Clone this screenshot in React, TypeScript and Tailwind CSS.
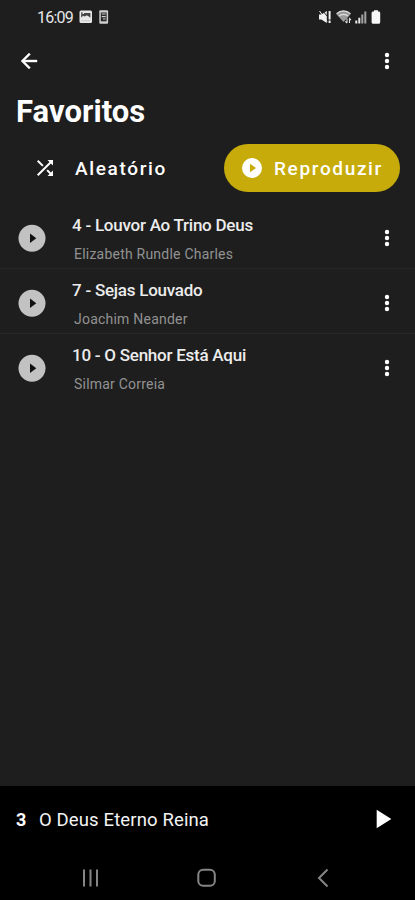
type Song = {
    id: number;
    title: string;
    author: string;
};

const songs: Song[] = [
    { id: 4, title: 'Louvor Ao Trino Deus', author: 'Elizabeth Rundle Charles' },
    { id: 7, title: 'Sejas Louvado', author: 'Joachim Neander' },
    { id: 10, title: 'O Senhor Está Aqui', author: 'Silmar Correia' },
];

function MoreIcon() {
    return (
        <svg viewBox="0 0 24 24" className="size-6 shrink-0" fill="#fff">
            <circle cx="12" cy="6" r="2.2" />
            <circle cx="12" cy="12" r="2.2" />
            <circle cx="12" cy="18" r="2.2" />
        </svg>
    );
}

function StatusBar() {
    return (
        <div className="flex h-[34px] shrink-0 items-center pl-[37px] pr-[34px]">
            <span className="w-[36px] whitespace-nowrap pt-px text-[16px] leading-none tracking-[-0.8px] text-[#e6e6e6]">16:09</span>
            {/* picture notification */}
            <svg viewBox="0 0 14 14" className="ml-[6px] h-[14px] w-[14px]">
                <rect x="0.5" y="0.5" width="12.5" height="12.5" rx="1.5" fill="#e8e8e8" />
                <path d="M2.2 2.3v5.5l1.8-2 1.8.8 1.5-1.2 1.5.3 2.6 2V3H5v1H3.5V2.3z" fill="#444" />
                <path d="M2.2 10.8h9.2" stroke="#bbb" strokeWidth=".8" />
            </svg>
            {/* phone with a note */}
            <svg viewBox="0 0 10 14" className="ml-[6px] h-[14px] w-[10px]">
                <rect x="0.3" y="0.2" width="8.8" height="13.6" rx="1" fill="#cfcfcf" />
                <path d="M1.8 2.5h5.8v8.8H1.8z" fill="#292929" />
                <path d="M2.7 4h4M2.7 6.6h4M4 9h2.6" stroke="#cfcfcf" strokeWidth="1.1" />
            </svg>
            <div className="ml-auto flex items-center">
                <svg viewBox="0 0 14 14" className="h-[14px] w-[14px]" fill="#f0f0f0">
                    <path d="M1 4.5h2.4L8.8 1v12L3.4 9.5H1z" />
                    <path d="M4 0l5.5 6.5" stroke="#1e1e1e" strokeWidth="1" />
                    <path d="M1.5 1l7.5 10.5" stroke="#f0f0f0" strokeWidth="1" />
                    <path d="M10.6 1h2v8.5h-2zM10.6 10.5h2v2.5h-2z" />
                </svg>
                <svg viewBox="0 0 16 14" className="ml-[4px] h-[14px] w-[16px]">
                    <path d="M0 3.8C4.2-.3 10.8-.3 15 3.8L7.5 12z" fill="#9a9a9a" />
                    <path d="M.6 3.6c4-3.7 9.8-3.7 13.8 0M2.8 6.2c2.7-2.4 6.7-2.4 9.4 0" fill="none" stroke="#ddd" strokeWidth="1.1" />
                    <path d="M11 8.5v4.5M9.3 11.3l1.7 1.7M13.5 13V8.5l1.5 1.7" fill="none" stroke="#e0e0e0" strokeWidth="1.1" />
                </svg>
                <svg viewBox="0 0 12 14" className="ml-[3px] h-[14px] w-[12px]">
                    <path d="M.3 10.5h2v3h-2zM3.3 7.8h2v5.7h-2z" fill="#e8e8e8" />
                    <path d="M6.3 4.5h2v9h-2zM9.3 1.5h2v12h-2z" fill="#a2a2a2" />
                </svg>
                <svg viewBox="0 0 10 14" className="ml-[4px] h-[14px] w-[10px]" fill="#f7f7f7">
                    <path d="M3 .3h4v1.3h.7c.8 0 1.5.7 1.5 1.5v9.2c0 .8-.7 1.5-1.5 1.5H2.1c-.8 0-1.5-.7-1.5-1.5V3.1c0-.8.7-1.5 1.5-1.5H3z" />
                </svg>
            </div>
        </div>
    );
}

function SongRow({ song, last }: { song: Song; last: boolean }) {
    return (
        <li className={`flex h-[65px] items-center border-b pl-[18px] pr-4 ${last ? 'border-transparent' : 'border-[#272727]'}`}>
            <svg viewBox="0 0 28 28" className="mt-1 size-7 shrink-0">
                <circle cx="14" cy="14.3" r="13.5" fill="#c2c2c2" />
                <path d="M12 9.6V19l6.3-4.7z" fill="#111" />
            </svg>
            <div className="ml-[26px] min-w-0 flex-1 whitespace-nowrap pt-[5px]">
                <p className="text-[17px] font-medium leading-6 tracking-[-0.25px] text-[#ececec]">
                    {song.id} - {song.title}
                </p>
                <p className="mt-[7px] pl-[2px] text-[14px] leading-5 tracking-[0.22px] text-[#929292]">{song.author}</p>
            </div>
            <div className="mt-1">
                <MoreIcon />
            </div>
        </li>
    );
}

export default function App() {
    return (
        <div className="flex h-[900px] w-[415px] flex-col overflow-hidden bg-[#1e1e1e] font-['Roboto',sans-serif] text-white">
            <StatusBar />
            <header className="flex h-[54px] shrink-0 items-center justify-between pl-[17px] pr-4">
                <svg viewBox="0 0 24 24" className="size-6" fill="#fff">
                    <path d="M20 11H7.83l5.59-5.59L12 4l-8 8 8 8 1.41-1.41L7.83 13H20z" stroke="#fff" strokeWidth=".4" />
                </svg>
                <MoreIcon />
            </header>
            <h1 className="h-[56px] shrink-0 pl-4 pt-[6px] text-[31px] font-bold leading-9 tracking-[0.05px]">Favoritos</h1>

            <div className="flex h-12 shrink-0 items-center pr-[15px]">
                <button className="flex h-12 flex-1 items-center pl-[33px]">
                    <svg viewBox="0 0 24 24" className="size-6" fill="#fff">
                        <path d="M10.59 9.17 5.41 4 4 5.41l5.17 5.17zM14.5 4l2.04 2.04L4 18.59 5.41 20 17.96 7.46 20 9.5V4zm.33 9.41-1.41 1.41 3.13 3.13L14.5 20H20v-5.5l-2.04 2.04z" />
                    </svg>
                    <span className="ml-[18px] pt-[2px] text-[19px] font-medium leading-6 tracking-[1.65px]">Aleatório</span>
                </button>
                <button className="flex h-12 w-[176px] items-center rounded-full bg-[#c7ab0b] pl-4">
                    <svg viewBox="0 0 24 24" className="size-6" fill="#fff">
                        <path d="M12 2a10 10 0 1 0 0 20 10 10 0 0 0 0-20zm-2 14.3V7.7l6 4.3z" />
                    </svg>
                    <span className="ml-[10px] pt-[2px] text-[19px] font-medium leading-6 tracking-[1.65px]">Reproduzir</span>
                </button>
            </div>

            <ul className="mt-3 flex-1">
                {songs.map((song, i) => (
                    <SongRow key={song.id} song={song} last={i === songs.length - 1} />
                ))}
            </ul>

            <div className="flex h-[68px] shrink-0 items-center bg-black pb-[2px] pl-4 pr-[17px]">
                <span className="w-[23px] pt-px text-[18px] font-bold leading-6">3</span>
                <span className="flex-1 pt-[2px] text-[18.5px] leading-6 tracking-[0.13px] text-[#f4f4f4]">O Deus Eterno Reina</span>
                <svg viewBox="0 0 24 24" className="size-8" fill="#fff">
                    <path d="M8 5v14l11-7z" />
                </svg>
            </div>
            <nav className="flex h-[46px] shrink-0 items-center bg-black pl-[81px] pt-px">
                <svg viewBox="0 0 20 20" className="size-5" stroke="#858585" strokeWidth="2">
                    <path d="M3 1.5v17M9.5 1.5v17M16 1.5v17" />
                </svg>
                <svg viewBox="0 0 20 20" className="ml-[96px] size-5" fill="none" stroke="#858585" strokeWidth="2">
                    <rect x="1.3" y="1.8" width="16.5" height="16" rx="4.8" />
                </svg>
                <svg viewBox="0 0 20 20" className="ml-[96px] size-5" fill="none" stroke="#858585" strokeWidth="2">
                    <path d="M14.5 1.5 6 10l8.5 8.5" />
                </svg>
            </nav>
        </div>
    );
}
